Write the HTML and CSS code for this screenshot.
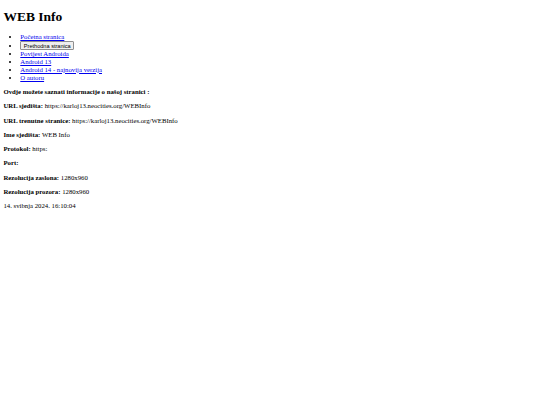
FILE: index.html
```html
<!DOCTYPE html>
<html lang="hr">
<head>
<meta charset="utf-8">
<title>WEB Info</title>
<link rel="stylesheet" href="styles.css">
</head>
<body class="page">
<h1 class="title">WEB Info</h1>
<ul class="nav">
<li><a href="#">Početna stranica</a></li>
<li><button class="back">Prethodna stranica</button></li>
<li><a href="#">Povijest Androida</a></li>
<li><a href="#">Android 13</a></li>
<li><a href="#">Android 14 - najnovija verzija</a></li>
<li><a href="#">O autoru</a></li>
</ul>
<p class="info"><b>Ovdje možete saznati informacije o našoj stranici :</b></p>
<p class="info"><b>URL sjedišta:</b> https://karloj13.neocities.org/WEBInfo</p>
<p class="info"><b>URL trenutne stranice:</b> https://karloj13.neocities.org/WEBInfo</p>
<p class="info"><b>Ime sjedišta:</b> WEB Info</p>
<p class="info"><b>Protokol:</b> https:</p>
<p class="info"><b>Port:</b> </p>
<p class="info"><b>Rezolucija zaslona:</b> 1280x960</p>
<p class="info"><b>Rezolucija prozora:</b> 1280x960</p>
<p class="info">14. svibnja 2024. 16:10:04</p>
</body>
</html>
```
FILE: styles.css
```css
html {
  background: #fff;
}
.page {
  font-family: "Liberation Serif", "Times New Roman", serif;
  font-size: 6.75px;
  line-height: 7.75px;
  color: #000;
  margin: 3.4px;
}
.title {
  font-size: 13.5px;
  line-height: 15.5px;
  font-weight: bold;
  margin: 5.5px 0 9px;
}
.nav {
  margin: 6.75px 0;
  padding-left: 16.9px;
}
.nav li {
  line-height: 7.75px;
}
.nav a {
  color: #0000ee;
}
.back {
  font-family: "Liberation Sans", Arial, sans-serif;
  font-size: 5.6px;
  line-height: 6.4px;
  padding: 0.4px 2.5px;
  margin: 0;
  border: 0.5px solid #8f8f8f;
  border-radius: 1px;
  background: #efefef;
  color: #000;
}
.info {
  margin: 6.5px 0;
}
```
